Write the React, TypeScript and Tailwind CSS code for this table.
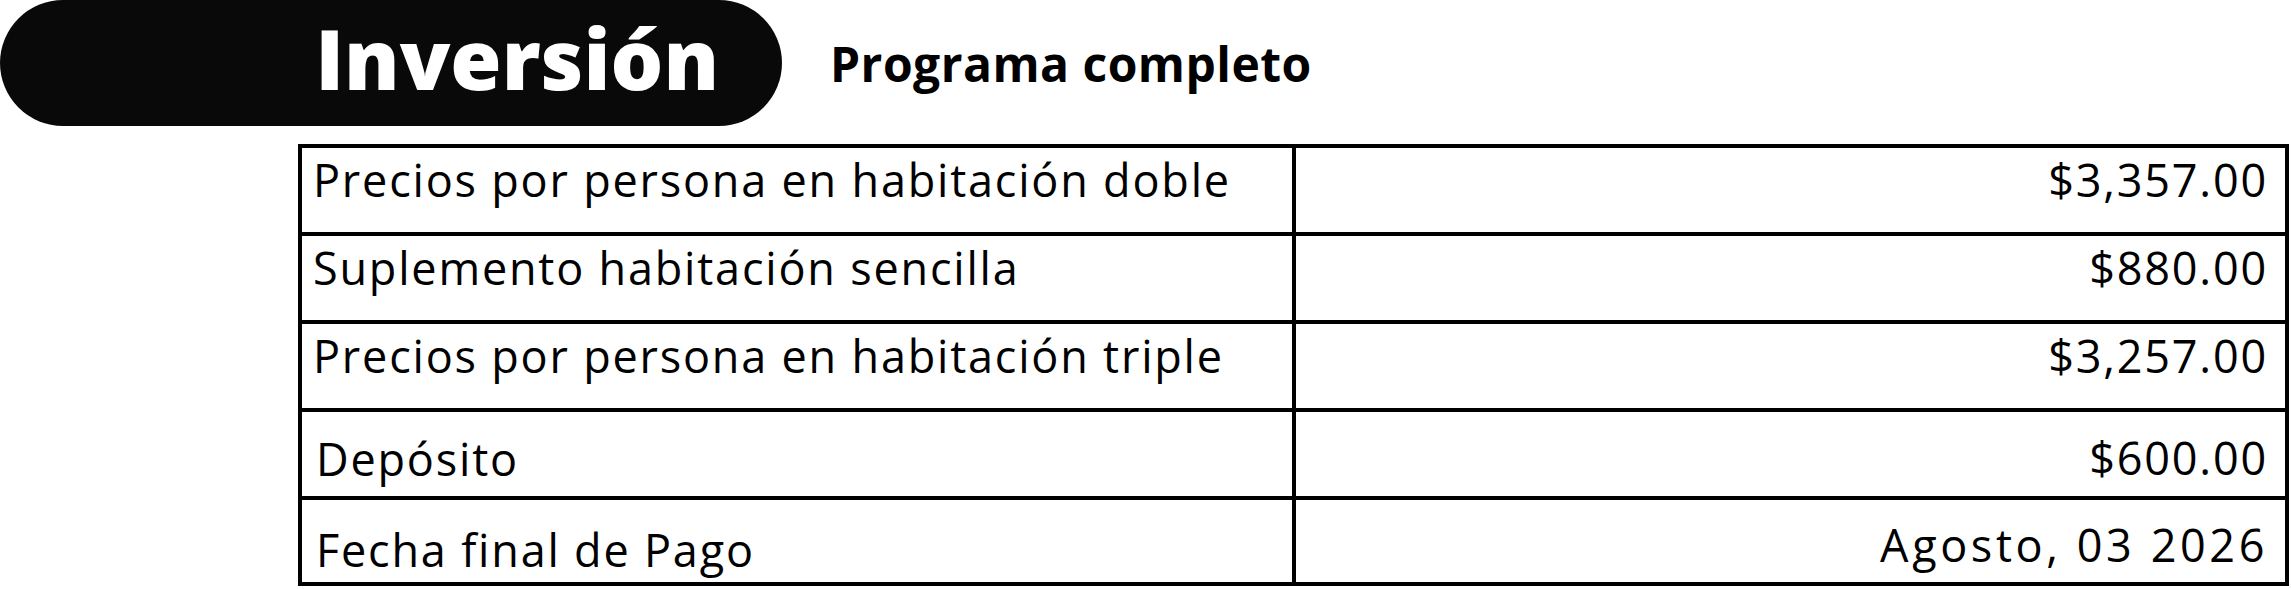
const font = { fontFamily: '"Open Sans", "Liberation Sans", sans-serif' };

type Row = { label: string; value: string; h: string; pt: string; vpt: string; pl: string; track: string };

const rows: Row[] = [
    { label: "Precios por persona en habitación doble", value: "$3,357.00", h: "h-[84px]", pt: "pt-[9px]", vpt: "pt-[9px]", pl: "pl-[11px]", track: "tracking-[0.04em]" },
    { label: "Suplemento habitación sencilla", value: "$880.00", h: "h-[88px]", pt: "pt-[9px]", vpt: "pt-[9px]", pl: "pl-[11px]", track: "tracking-[0.04em]" },
    { label: "Precios por persona en habitación triple", value: "$3,257.00", h: "h-[88px]", pt: "pt-[9px]", vpt: "pt-[9px]", pl: "pl-[11px]", track: "tracking-[0.04em]" },
    { label: "Depósito", value: "$600.00", h: "h-[88px]", pt: "pt-[24px]", vpt: "pt-[23px]", pl: "pl-[14px]", track: "tracking-[0.04em]" },
    { label: "Fecha final de Pago", value: "Agosto, 03 2026", h: "h-[86px]", pt: "pt-[27px]", vpt: "pt-[22px]", pl: "pl-[14px]", track: "tracking-[0.08em]" },
];

export default function App() {
    return (
        <div className="w-[2291px] h-[589px] bg-white text-black overflow-hidden" style={font}>
            {/* header */}
            <div className="flex items-start">
                <div className="w-[782px] h-[126px] rounded-full bg-[#0a0909] flex justify-end pr-[63px] pt-[16px]">
                    <span className="text-[83px] leading-none font-extrabold text-white">Inversión</span>
                </div>
                <span className="ml-[48px] mt-[40px] text-[48px] leading-none font-bold tracking-[0.01em]">
                    Programa completo
                </span>
            </div>

            {/* price table */}
            <div className="ml-[298px] mt-[18px] w-[1991px] border-4 border-black">
                {rows.map((row, i) => (
                    <div
                        key={row.label}
                        className={`grid grid-cols-[994px_1fr] ${row.h} ${i > 0 ? "border-t-4 border-black" : ""}`}
                    >
                        <div className={`border-r-4 border-black ${row.pt} ${row.pl}`}>
                            <span className="text-[45px] leading-[45px] tracking-[0.04em]">{row.label}</span>
                        </div>
                        <div className={`text-right pr-[17px] ${row.vpt}`}>
                            <span className={`text-[45px] leading-[45px] ${row.track}`}>{row.value}</span>
                        </div>
                    </div>
                ))}
            </div>
        </div>
    );
}
